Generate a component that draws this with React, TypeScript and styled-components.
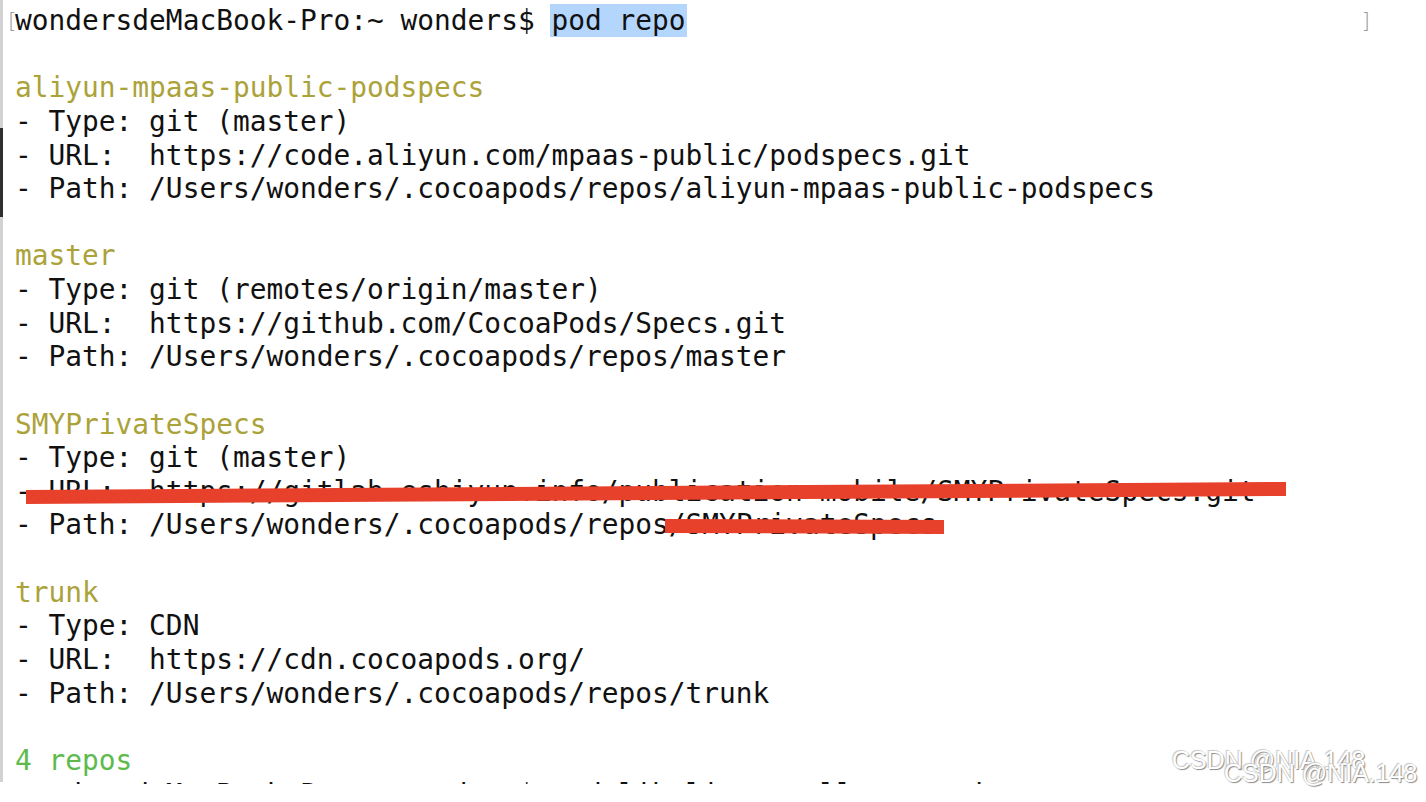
import React from 'react';
import styled, { createGlobalStyle } from 'styled-components';

type Tone = 'plain' | 'repo' | 'ok';

type Line = { text: string; tone?: Tone };

const lines: Line[] = [
  { text: '' },
  { text: 'aliyun-mpaas-public-podspecs', tone: 'repo' },
  { text: '- Type: git (master)' },
  { text: '- URL:  https://code.aliyun.com/mpaas-public/podspecs.git' },
  { text: '- Path: /Users/wonders/.cocoapods/repos/aliyun-mpaas-public-podspecs' },
  { text: '' },
  { text: 'master', tone: 'repo' },
  { text: '- Type: git (remotes/origin/master)' },
  { text: '- URL:  https://github.com/CocoaPods/Specs.git' },
  { text: '- Path: /Users/wonders/.cocoapods/repos/master' },
  { text: '' },
  { text: 'SMYPrivateSpecs', tone: 'repo' },
  { text: '- Type: git (master)' },
  { text: '- URL:  https://gitlab.eshiyun.info/publication-mobile/SMYPrivateSpecs.git' },
  { text: '- Path: /Users/wonders/.cocoapods/repos/SMYPrivateSpecs' },
  { text: '' },
  { text: 'trunk', tone: 'repo' },
  { text: '- Type: CDN' },
  { text: '- URL:  https://cdn.cocoapods.org/' },
  { text: '- Path: /Users/wonders/.cocoapods/repos/trunk' },
  { text: '' },
  { text: '4 repos', tone: 'ok' },
];

const toneColor: Record<Tone, string> = {
  plain: '#111111',
  repo: '#aba23a',
  ok: '#5dbb4e',
};

const App = () => {
  return (
    <>
      <GlobalStyle />
      <Terminal>
        <Gutter>
          <ScrollMark />
        </Gutter>
        <Output>
          <PromptRow>
            <Mark>[</Mark>
            <span>
              wondersdeMacBook-Pro:~ wonders$ <Selected>pod repo</Selected>
            </span>
            <EndMark>]</EndMark>
          </PromptRow>
          {lines.map((l, i) => (
            <Row key={i} tone={l.tone || 'plain'}>
              {l.text || '\u00a0'}
            </Row>
          ))}
          <PromptRow trailing>
            <Mark>[</Mark>
            <span>wondersdeMacBook-Pro:~ wonders$ pod lib lint --allow-warnings</span>
          </PromptRow>
        </Output>
        <Redaction viewBox="0 0 1426 802" preserveAspectRatio="none">
          <polygon points="26,490 1286,482 1286,496 26,504" fill="#e8412b" />
          <polygon points="665,519 944,520 944,534 665,533" fill="#e8412b" />
        </Redaction>
      </Terminal>
      <Watermark top={746} left={1172}>CSDN @NIA.148</Watermark>
      <Watermark top={759} left={1224}>CSDN @NIA.148</Watermark>
    </>
  );
};

const GlobalStyle = createGlobalStyle`
  html, body {
    margin: 0;
    padding: 0;
    background: #ffffff;
  }
  body {
    width: 1426px;
    height: 802px;
    overflow: hidden;
    position: relative;
  }
`;

const Terminal = styled.div`
  position: relative;
  display: flex;
  height: 784px;
  overflow: hidden;
  background: #ffffff;
`;

const Gutter = styled.div`
  position: relative;
  flex: 0 0 3px;
  height: 782px;
  background: #d2d2d2;
`;

const ScrollMark = styled.div`
  position: absolute;
  left: 0;
  top: 128px;
  width: 3px;
  height: 89px;
  background: #2e2e2e;
`;

const Output = styled.div`
  flex: 1;
  padding: 4px 0 0 4px;
  font-family: 'DejaVu Sans Mono', 'Liberation Mono', monospace;
  font-size: 27.85px;
  line-height: 33.64px;
  white-space: pre;
`;

const Row = styled.div<{ tone?: Tone }>`
  height: 33.64px;
  padding-left: 8px;
  color: ${(p) => toneColor[p.tone || 'plain']};
`;

const PromptRow = styled.div<{ trailing?: boolean }>`
  display: flex;
  align-items: flex-start;
  height: 33.64px;
  margin-top: ${(p) => (p.trailing ? '1px' : '0')};
  padding-right: 56px;
  color: #111111;
`;

const Mark = styled.span`
  flex: 0 0 8px;
  min-width: 0;
  overflow: visible;
  color: #9a9a9a;
  font-family: 'DejaVu Sans', sans-serif;
  font-weight: 300;
  font-size: 22px;
  line-height: 33.64px;
  text-indent: 1px;
`;

const EndMark = styled(Mark)`
  flex: none;
  margin-left: auto;
`;

const Selected = styled.span`
  background: #b4d6fd;
  padding: 0 1px;
  margin: 0 -1px;
`;

const Redaction = styled.svg`
  position: absolute;
  left: 0;
  top: 0;
  width: 1426px;
  height: 802px;
  pointer-events: none;
`;

const Watermark = styled.div<{ top: number; left: number }>`
  position: absolute;
  top: ${(p) => p.top}px;
  left: ${(p) => p.left}px;
  font-family: 'Liberation Sans', Arial, sans-serif;
  font-size: 25px;
  color: #ffffff;
  white-space: nowrap;
  text-shadow: 1px 1px 1px #8a8a8a, -1px -1px 1px #c8c8c8;
`;

export default App;
